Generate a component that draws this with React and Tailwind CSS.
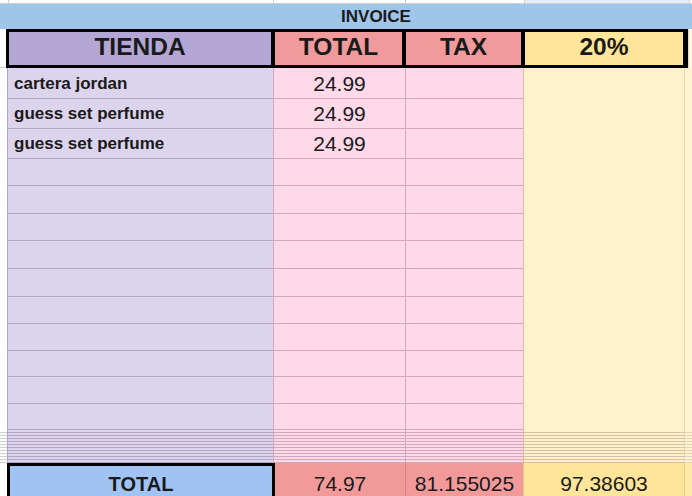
import React from 'react';

const rows = [
  { h: 'h-[31px]', name: 'cartera jordan', total: '24.99' },
  { h: 'h-[30px]', name: 'guess set perfume', total: '24.99' },
  { h: 'h-[30px]', name: 'guess set perfume', total: '24.99' },
  { h: 'h-[27px]' },
  { h: 'h-[28px]' },
  { h: 'h-[27px]' },
  { h: 'h-[28px]' },
  { h: 'h-[28px]' },
  { h: 'h-[27px]' },
  { h: 'h-[27px]' },
  { h: 'h-[26px]' },
  { h: 'h-[27px]' },
  { h: 'h-[26px]' },
];

// hidden rows squeezed together above the totals
const squeezed = Array.from({ length: 11 });

function BodyRow({ h, name, total }) {
  return (
    <div className={`flex ${h}`}>
      <div className="w-[7px] bg-white" />
      <div className="w-[266px] flex items-end pb-[6px] pl-[6px] bg-[#dcd3ec] border-l border-b border-[#b3a6c6] text-[17px] font-bold text-[#1a1a1a] leading-none">
        {name}
      </div>
      <div className="w-[132px] flex items-end justify-center pb-[4px] bg-[#ffd9e7] border-l border-b border-[#cfa9bb] text-[21px] text-[#1a1a1a] leading-none">
        {total}
      </div>
      <div className="w-[118px] bg-[#ffd9e7] border-l border-b border-[#d3a9b9]" />
      <div className="w-[161px] bg-[#fff1cc] border-l border-[#d8bf9f]" />
      <div className="flex-1 bg-[#fff3d2] border-l border-[#e3d2b5]" />
    </div>
  );
}

function SqueezedRow() {
  return (
    <div className="flex h-[3px]">
      <div className="w-[7px] bg-white border-b border-[#cfcfcf]" />
      <div className="w-[266px] bg-[#dcd3ec] border-l border-b border-[#b3a6c6]" />
      <div className="w-[132px] bg-[#ffd9e7] border-l border-b border-[#cfa9bb]" />
      <div className="w-[118px] bg-[#ffd9e7] border-l border-b border-[#d3a9b9]" />
      <div className="w-[161px] bg-[#fff1cc] border-l border-b border-[#d8bf9f]" />
      <div className="flex-1 bg-[#fff3d2] border-l border-b border-[#e3d2b5]" />
    </div>
  );
}

export default function App() {
  return (
    <div className="w-[692px] h-[496px] overflow-hidden bg-white font-['Liberation_Sans',Arial,sans-serif] text-[#1a1a1a]">
      {/* top strip of the row above */}
      <div className="flex h-[4px] border-b border-[#d0d0d0]">
        <div className="w-[8px]" />
        <div className="w-[265px] border-l border-[#d0d0d0]" />
        <div className="w-[132px] border-l border-[#d0d0d0]" />
        <div className="w-[119px] border-l border-[#d0d0d0]" />
        <div className="w-[165px] bg-[#e6ecf8] border-l border-[#d0d0d0]" />
        <div className="flex-1 border-l border-[#d0d0d0]" />
      </div>

      {/* invoice banner */}
      <div className="h-[25px] bg-[#9fc5e8] flex items-end justify-center pl-[60px] pb-[4px]">
        <span className="text-[17px] font-bold leading-none">INVOICE</span>
      </div>

      {/* header row */}
      <div className="flex h-[39px]">
        <div className="w-[6px] bg-white border-b border-[#cfcfcf]" />
        <div className="w-[682px] bg-black pl-[3px] pr-[5px] py-[3px] grid grid-cols-[262px_127px_115px_158px] gap-[4px] text-[24.5px] font-bold leading-none">
          <div className="bg-[#b4a7d6] flex items-center justify-center pb-[2px]">TIENDA</div>
          <div className="bg-[#f19a9b] flex items-center justify-center pb-[2px]">TOTAL</div>
          <div className="bg-[#f19a9b] flex items-center justify-center pb-[2px]">TAX</div>
          <div className="bg-[#ffe599] flex items-center justify-center pb-[2px]">20%</div>
        </div>
        <div className="flex-1 bg-[#fdf6e4] border-l border-[#e0d6c4]" />
      </div>

      {/* item rows */}
      {rows.map((r, i) => (
        <BodyRow key={i} {...r} />
      ))}
      {squeezed.map((_, i) => (
        <SqueezedRow key={i} />
      ))}

      {/* totals */}
      <div className="flex h-[33px] text-[21px] leading-none">
        <div className="w-[7px] bg-white" />
        <div className="w-[268px] bg-[#a0c3f4] border-black border-l-[3px] border-t-[3px] border-r-[3px] flex items-center justify-center pt-[5px] text-[20px] font-bold">
          TOTAL
        </div>
        <div className="w-[130px] bg-[#f29a9a] flex items-center justify-center pt-[7px]">74.97</div>
        <div className="w-[118px] bg-[#f29a9a] border-l border-[#d98585] flex items-center justify-center pt-[7px]">81.155025</div>
        <div className="w-[161px] bg-[#ffe599] border-l border-[#e6c98a] flex items-center justify-center pt-[7px]">97.38603</div>
        <div className="flex-1 bg-[#ffe9a8] border-l border-[#e6c98a]" />
      </div>
    </div>
  );
}
